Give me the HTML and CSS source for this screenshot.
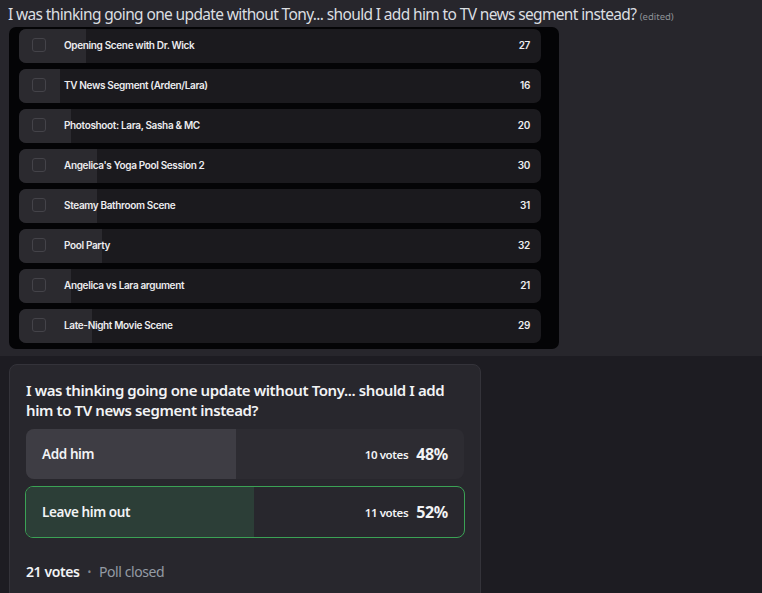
FILE: index.html
```html
<!DOCTYPE html>
<html>
<head>
<meta charset="utf-8">
<link rel="stylesheet" href="styles.css">
</head>
<body>
<div class="msg">
  <p class="msg-text">I was thinking going one update without Tony... should I add him to TV news segment instead? <span class="edited">(edited)</span></p>
  <div class="shot">
    <div class="row"><div class="fill" style="width:67px"></div><span class="box"></span><span class="label">Opening Scene with Dr. Wick</span><span class="count">27</span></div>
    <div class="row"><div class="fill" style="width:41px"></div><span class="box"></span><span class="label">TV News Segment (Arden/Lara)</span><span class="count">16</span></div>
    <div class="row"><div class="fill" style="width:52px"></div><span class="box"></span><span class="label">Photoshoot: Lara, Sasha &amp; MC</span><span class="count">20</span></div>
    <div class="row"><div class="fill" style="width:78px"></div><span class="box"></span><span class="label">Angelica's Yoga Pool Session 2</span><span class="count">30</span></div>
    <div class="row"><div class="fill" style="width:78px"></div><span class="box"></span><span class="label">Steamy Bathroom Scene</span><span class="count">31</span></div>
    <div class="row"><div class="fill" style="width:83px"></div><span class="box"></span><span class="label">Pool Party</span><span class="count">32</span></div>
    <div class="row"><div class="fill" style="width:52px"></div><span class="box"></span><span class="label">Angelica vs Lara argument</span><span class="count">21</span></div>
    <div class="row"><div class="fill" style="width:73px"></div><span class="box"></span><span class="label">Late-Night Movie Scene</span><span class="count">29</span></div>
  </div>
</div>
<div class="lower">
  <div class="poll">
    <h2 class="question">I was thinking going one update without Tony... should I add him to TV news segment instead?</h2>
    <div class="option">
      <div class="ofill" style="width:210px"></div>
      <span class="oname">Add him</span>
      <span class="ovotes">10 votes</span>
      <span class="opct">48%</span>
    </div>
    <div class="option win">
      <div class="ofill" style="width:228px"></div>
      <span class="oname">Leave him out</span>
      <span class="ovotes">11 votes</span>
      <span class="opct">52%</span>
    </div>
    <div class="footer">
      <span class="total">21 votes</span>
      <span class="dot">•</span>
      <span class="closed">Poll closed</span>
    </div>
  </div>
</div>
</body>
</html>
```
FILE: styles.css
```css
html, body {
  margin: 0;
  padding: 0;
  background: #1d1c22;
}
body {
  width: 762px;
  height: 593px;
  overflow: hidden;
  font-family: "Noto Sans", "Open Sans", sans-serif;
}
.msg {
  background: #27262c;
  padding: 0 0 7px 9px;
}
.msg-text {
  margin: 0 0 0 -1px;
  padding-top: 3px;
  height: 24px;
  font-size: 15.5px;
  line-height: 22px;
  letter-spacing: -0.64px;
  color: #dbdee1;
  white-space: nowrap;
}
.edited {
  font-size: 9.5px;
  letter-spacing: 0;
  color: #8e9297;
}
.shot {
  width: 550px;
  box-sizing: border-box;
  background: #040406;
  border-radius: 7px;
  padding: 2px 18px 6px 10px;
  display: flex;
  flex-direction: column;
  gap: 6px;
}
.row {
  position: relative;
  height: 34px;
  border-radius: 7px;
  background: #1b1a1e;
  overflow: hidden;
  display: flex;
  align-items: center;
  padding: 0 11px 2px 13px;
  box-sizing: border-box;
  font-family: Inter, "Noto Sans", sans-serif;
  font-size: 10px;
  font-weight: 600;
  letter-spacing: -0.35px;
  color: #ececee;
}
.fill {
  position: absolute;
  left: 0;
  top: 0;
  bottom: 0;
  background: #2b2a2f;
}
.box {
  position: relative;
  width: 14px;
  height: 14px;
  box-sizing: border-box;
  border: 1px solid #444349;
  border-radius: 3px;
  background: #2c2b30;
  margin-right: 18px;
  flex: none;
}
.label {
  position: relative;
  flex: 1;
}
.count {
  position: relative;
}
.lower {
  padding: 8px 0 0 9px;
}
.poll {
  width: 472px;
  box-sizing: border-box;
  height: 240px;
  background: #28272d;
  border: 1px solid #34333a;
  border-radius: 8px;
  padding: 16px 16px 0 16px;
}
.question {
  margin: 0 0 9px 0;
  font-size: 15px;
  line-height: 19.5px;
  font-weight: 600;
  letter-spacing: -0.4px;
  color: #f2f3f5;
}
.option {
  position: relative;
  height: 50px;
  border-radius: 8px;
  background: #2d2c32;
  overflow: hidden;
  display: flex;
  align-items: center;
  padding: 0 16px;
  margin-bottom: 7px;
  color: #f2f3f5;
  box-sizing: border-box;
}
.option.win {
  height: 52px;
  margin: 0 -1px;
  border: 1px solid #3ba255;
  background: #28272d;
}
.ofill {
  position: absolute;
  left: 0;
  top: 0;
  bottom: 0;
  background: #3e3d44;
}
.win .ofill {
  background: #2c3e37;
}
.oname {
  position: relative;
  flex: 1;
  font-size: 13.5px;
  font-weight: 600;
  letter-spacing: -0.4px;
}
.ovotes {
  position: relative;
  font-size: 11.5px;
  font-weight: 600;
  letter-spacing: -0.4px;
  margin-right: 8px;
}
.opct {
  position: relative;
  font-size: 16px;
  font-weight: 700;
  letter-spacing: -0.3px;
}
.footer {
  margin-top: 24px;
  display: flex;
  align-items: center;
  font-size: 14px;
  letter-spacing: -0.4px;
}
.total {
  font-weight: 600;
  color: #f2f3f5;
}
.dot {
  color: #80848e;
  font-size: 10px;
  margin: 0 8px;
}
.closed {
  color: #949ba4;
}
```
